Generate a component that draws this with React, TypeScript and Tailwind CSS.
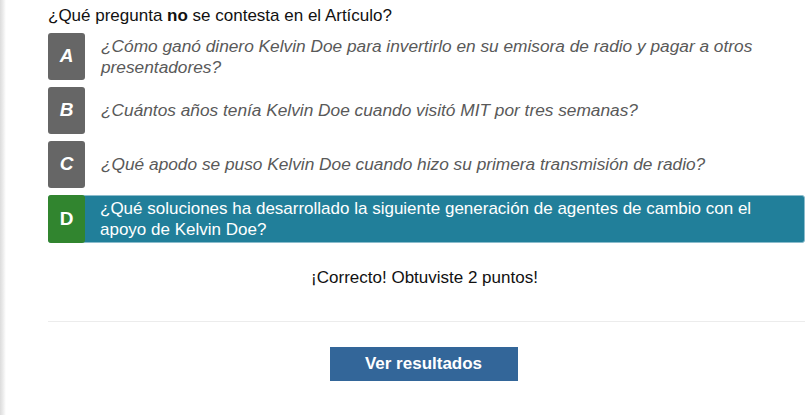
import React from "react";

type Option = {
  letter: string;
  text: string;
  correct?: boolean;
};

const options: Option[] = [
  {
    letter: "A",
    text: "¿Cómo ganó dinero Kelvin Doe para invertirlo en su emisora de radio y pagar a otros presentadores?",
  },
  {
    letter: "B",
    text: "¿Cuántos años tenía Kelvin Doe cuando visitó MIT por tres semanas?",
  },
  {
    letter: "C",
    text: "¿Qué apodo se puso Kelvin Doe cuando hizo su primera transmisión de radio?",
  },
  {
    letter: "D",
    text: "¿Qué soluciones ha desarrollado la siguiente generación de agentes de cambio con el apoyo de Kelvin Doe?",
    correct: true,
  },
];

function OptionRow({ option }: { option: Option }) {
  if (option.correct) {
    return (
      <div className="flex min-h-[48px] rounded-[3px] border border-[#8bbccc] bg-[#217f9a]">
        <div className="-my-px -ml-px flex w-[37px] shrink-0 items-center justify-center rounded-[3px] bg-[#31852f] text-[19px] font-bold text-white">
          {option.letter}
        </div>
        <p className="flex items-center py-[2px] pl-[15px] pr-[20px] text-[17px] leading-[21px] text-white">
          {option.text}
        </p>
      </div>
    );
  }

  return (
    <div className="flex min-h-[47px]">
      <div className="flex w-[37px] shrink-0 items-center justify-center rounded-[3px] bg-[#666666] text-[19px] font-bold italic text-white">
        {option.letter}
      </div>
      <p className="flex items-center py-[2px] pl-[16px] pr-[20px] text-[17.3px] italic leading-[21px] text-[#595959]">
        {option.text}
      </p>
    </div>
  );
}

export default function App() {
  return (
    <div
      className="flex h-[415px] w-[811px] bg-white"
      style={{ fontFamily: '"Liberation Sans", Arial, sans-serif' }}
    >
      <div className="w-[6px] shrink-0 bg-gradient-to-r from-[#dcdcdc] via-[#ececec] to-white" />
      <div className="flex flex-1 flex-col pl-[42px] pr-[6px]">
        <h2 className="pt-[5px] text-[17px] leading-[22px] text-[#111111]">
          ¿Qué pregunta <b>no</b> se contesta en el Artículo?
        </h2>

        <div className="mt-[6px] flex flex-col gap-[7px]">
          {options.map((option) => (
            <OptionRow key={option.letter} option={option} />
          ))}
        </div>

        <p className="mt-[24px] pr-[4px] text-center text-[17px] leading-[22px] text-[#111111]">
          ¡Correcto! Obtuviste 2 puntos!
        </p>

        <hr className="mt-[32px] border-t border-[#ececec]" />

        <div className="mt-[25px] flex justify-center pr-[6px]">
          <button className="h-[34px] w-[188px] bg-[#336699] text-[17px] font-bold text-white">
            Ver resultados
          </button>
        </div>
      </div>
    </div>
  );
}
